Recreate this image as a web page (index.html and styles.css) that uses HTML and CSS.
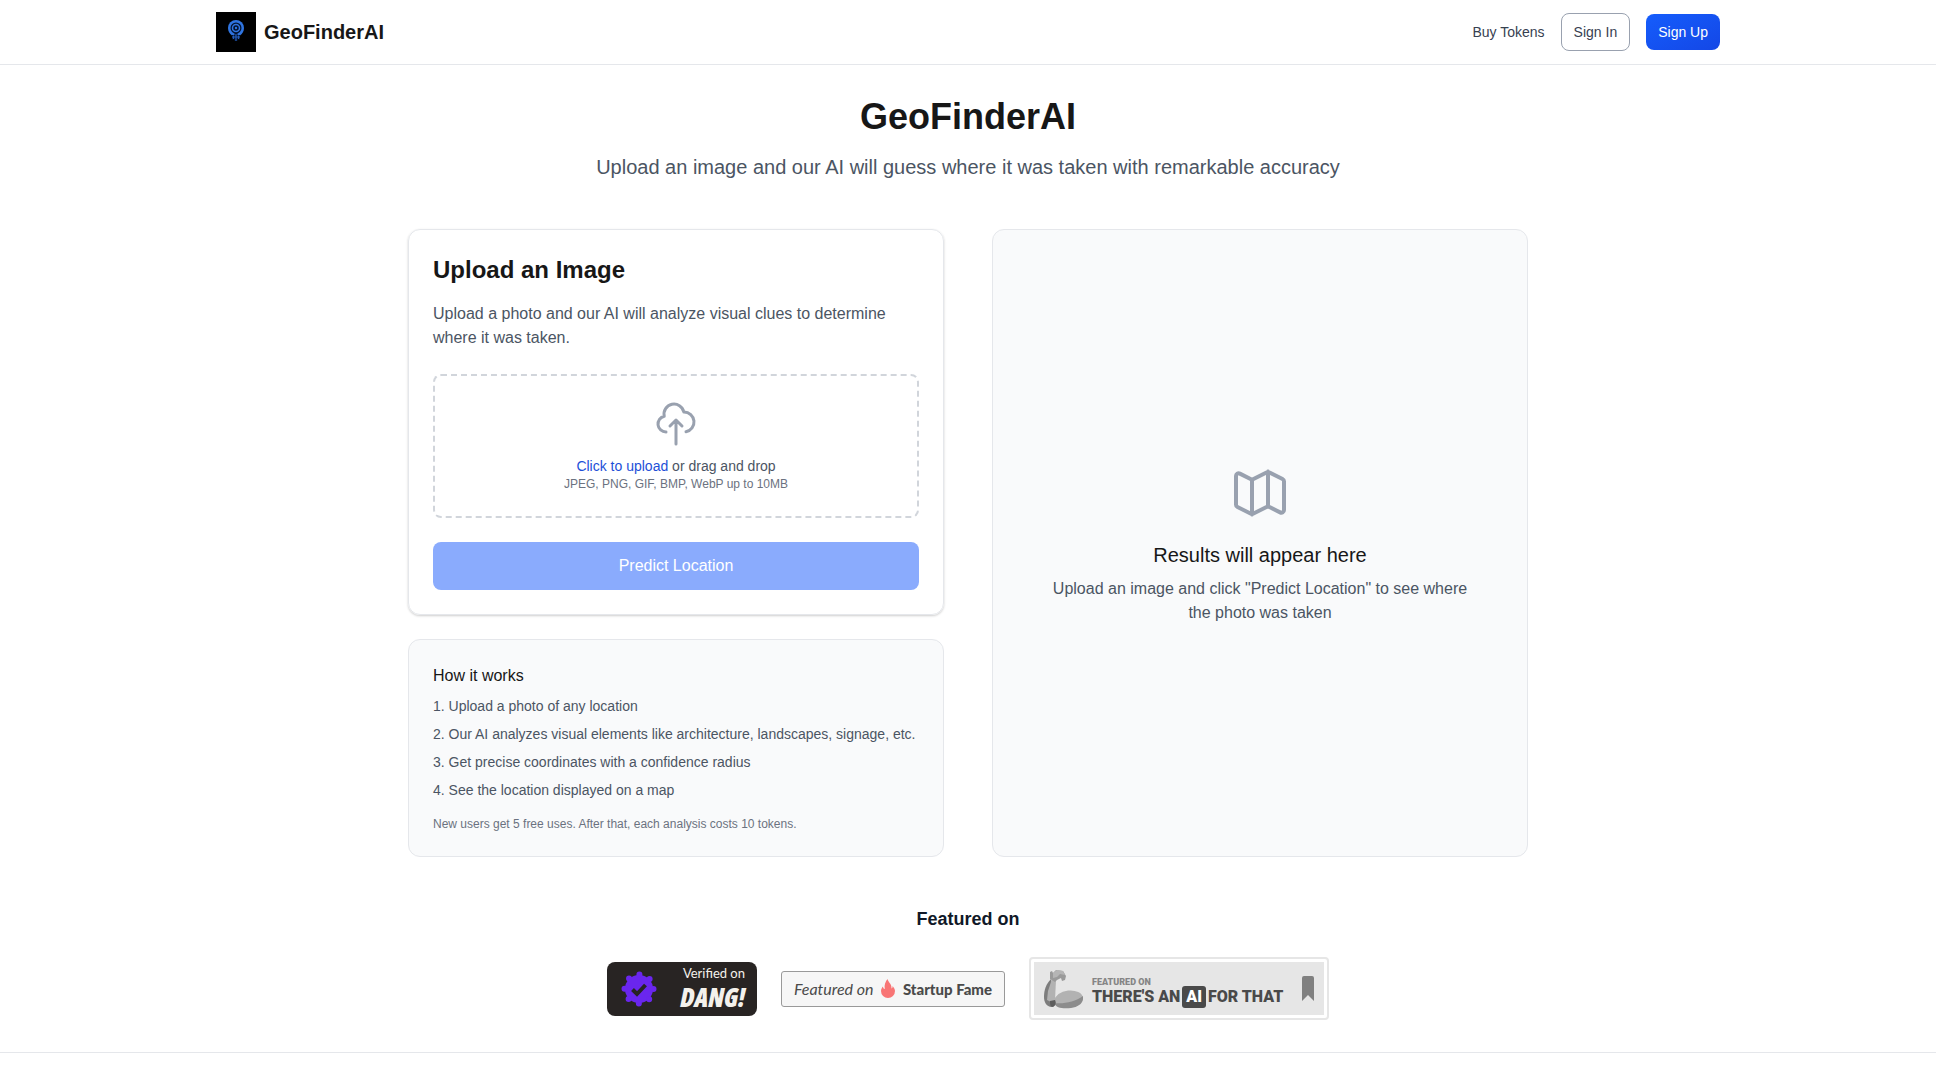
FILE: index.html
```html
<!DOCTYPE html>
<html lang="en">
  <head>
    <meta charset="UTF-8" />
    <meta name="viewport" content="width=device-width, initial-scale=1.0" />
    <title>GeoFinderAI</title>
    <link rel="stylesheet" href="styles.css">
  </head>
  <body>
    <header class="header">
      <div class="header-inner">
        <a class="brand" href="#">
          <svg class="logo" viewBox="0 0 40 40">
            <rect width="40" height="40" fill="#000" />
            <path d="M16 23.500C13.500 21.500 12 19 12 16a8 8 0 0 1 16 0c0 3-1.500 5.500-4 7.500z" fill="#2f74e0" />
            <circle cx="20" cy="16" r="5.500" fill="#04122c" />
            <circle cx="20" cy="16" r="3.500" fill="none" stroke="#2f74e0" stroke-width="1.500" />
            <circle cx="20" cy="16" r="1.200" fill="#2f74e0" />
            <path d="M20 21v8M16 25h8M17.500 23v4.500M22.500 23v4.500" fill="none" stroke="#04122c" stroke-width="3" />
            <path d="M20 22v7M16 25h8M17.500 23.500v3.500M22.500 23.500v3.500" fill="none" stroke="#255cb8" stroke-width="1.200" />
          </svg>
          <span>GeoFinderAI</span>
        </a>
        <nav class="nav">
          <a class="nav-link" href="#">Buy Tokens</a>
          <button class="btn btn-outline" type="button">Sign In</button>
          <button class="btn btn-primary" type="button">Sign Up</button>
        </nav>
      </div>
    </header>

    <main class="main">
      <div class="hero">
        <h1>GeoFinderAI</h1>
        <p>Upload an image and our AI will guess where it was taken with remarkable accuracy</p>
      </div>

      <div class="columns">
        <div class="left">
          <section class="card upload">
            <h2>Upload an Image</h2>
            <p class="desc">Upload a photo and our AI will analyze visual clues to determine where it was taken.</p>
            <label class="dropzone" for="file">
              <svg class="cloud" viewBox="0 0 24 24">
                <path d="M7 16a4 4 0 01-.88-7.903A5 5 0 1115.9 6L16 6a5 5 0 011 9.9M15 13l-3-3m0 0l-3 3m3-3v12" />
              </svg>
              <span class="drop-text"><span class="drop-link">Click to upload</span> or drag and drop</span>
              <span class="drop-hint">JPEG, PNG, GIF, BMP, WebP up to 10MB</span>
              <input id="file" type="file" accept="image/*" hidden />
            </label>
            <button class="predict" type="button" disabled>Predict Location</button>
          </section>

          <section class="card muted">
            <h3>How it works</h3>
            <ol class="steps">
              <li>Upload a photo of any location</li>
              <li>Our AI analyzes visual elements like architecture, landscapes, signage, etc.</li>
              <li>Get precise coordinates with a confidence radius</li>
              <li>See the location displayed on a map</li>
            </ol>
            <p class="note">New users get 5 free uses. After that, each analysis costs 10 tokens.</p>
          </section>
        </div>

        <section class="card muted results">
          <svg class="map" viewBox="0 0 24 24">
            <path d="M9 20l-5.447-2.724A1 1 0 013 16.382V5.618a1 1 0 011.447-.894L9 7m0 13l6-3m-6 3V7m6 10l4.553 2.276A1 1 0 0021 18.382V7.618a1 1 0 00-.553-.894L15 4m0 13V4m0 0L9 7" />
          </svg>
          <h3>Results will appear here</h3>
          <p>Upload an image and click "Predict Location" to see where the photo was taken</p>
        </section>
      </div>
    </main>

    <section class="featured">
      <h2>Featured on</h2>
      <div class="badges">
        <a class="badge dang" href="#">
          <svg class="seal" viewBox="0 0 36 36">
            <circle cx="18" cy="18" r="14" />
            <circle cx="18" cy="18" r="14.500" class="scallop" />
            <path d="M11.500 18.500l4.500 4.500 8.500-9" />
          </svg>
          <span class="dang-text">
            <span class="dang-top">Verified on</span>
            <span class="dang-name">DANG!</span>
          </span>
        </a>
        <a class="badge fame" href="#">
          <span class="fame-pre">Featured on</span>
          <svg class="flame" viewBox="0 0 14 19">
            <path d="M6.500 0C7 3 11 5 10.500 9.500 11.500 9 11.700 8 11.500 7 13 8.500 14 10.200 14 12a7 7 0 0 1-14 0C0 10 1 8.500 2 7.500c0 1.500.700 2.300 1.800 2.500C3 6 4.500 2.500 6.500 0z" />
          </svg>
          <span class="fame-name">Startup Fame</span>
        </a>
        <a class="badge taaft" href="#">
          <span class="taaft-inner">
            <svg class="arm" viewBox="0 0 39 40">
              <path d="M7 10C2 15 0 21 0 28c0 5 2 9 7 10 4 0 5-4 5-6z" fill="#7d7d7d" />
              <path d="M8 10L4 22l-1 9 6 3 2-3 1-20z" fill="#b2b2b2" />
              <path d="M6 10V3l2-1 1 2 3-3 7 1 3 5-1 4-3 1-1-3-4 2-2 2z" fill="#9a9a9a" />
              <path d="M9 4l4-3 6 1 2 4-5-1-3 3-4 1z" fill="#b5b5b5" />
              <ellipse cx="25" cy="30" rx="14" ry="8.500" transform="rotate(-6 25 30)" fill="#b2b2b2" />
              <path d="M10 34c10 1 21-1 29-7 1 7-4 11-12 12-8 1-15 0-17-5z" fill="#8c8c8c" />
              <path d="M6 32l5-1c1 3 1 5-2 7-3 0-3-3-3-6z" fill="#5c5c5c" />
            </svg>
            <span class="taaft-text">
              <span class="taaft-top">FEATURED ON</span>
              <span class="taaft-name">THERE'S AN<b>AI</b>FOR THAT</span>
            </span>
            <svg class="bookmark" viewBox="0 0 12 25">
              <path d="M2 0h8a2 2 0 0 1 2 2v23l-6-6-6 6V2a2 2 0 0 1 2-2z" />
            </svg>
          </span>
        </a>
      </div>
    </section>

    <footer class="footer"></footer>
  </body>
</html>
```
FILE: styles.css
```css
* {
  margin: 0;
  padding: 0;
  box-sizing: border-box;
}
body {
  font-family: "Liberation Sans", Arial, sans-serif;
  font-size: 16px;
  line-height: 24px;
  color: #171717;
  background: #fff;
}
a {
  color: inherit;
  text-decoration: none;
}
button {
  font: inherit;
}
svg {
  display: block;
  flex-shrink: 0;
}

/* Header */
.header {
  border-bottom: 1px solid #e5e7eb;
}
.header-inner {
  display: flex;
  justify-content: space-between;
  align-items: center;
  max-width: 1536px;
  height: 64px;
  margin: 0 auto;
  padding: 0 16px;
}
.brand {
  display: flex;
  align-items: center;
  gap: 8px;
  font-size: 20px;
  font-weight: bold;
}
.logo {
  width: 40px;
  height: 40px;
}
.nav {
  display: flex;
  align-items: center;
  gap: 16px;
  font-size: 14px;
  line-height: 20px;
}
.nav-link {
  color: #374151;
}
.btn {
  padding: 8px 12px;
  border: 0;
  border-radius: 8px;
}
.btn-outline {
  border: 1px solid #99a1af;
  color: #374151;
  background: #fff;
}
.btn-primary {
  color: #fff;
  background: linear-gradient(to bottom right, #155dfc, #1447e6);
}

/* Hero */
.main {
  max-width: 1152px;
  margin: 0 auto;
  padding: 32px 16px 0;
}
.hero {
  margin-bottom: 48px;
  text-align: center;
}
.hero h1 {
  margin-bottom: 16px;
  font-size: 36px;
  line-height: 40px;
}
.hero p {
  font-size: 20px;
  line-height: 28px;
  color: #4b5563;
}

/* Cards */
.columns {
  display: grid;
  grid-template-columns: 1fr 1fr;
  gap: 48px;
}
.left {
  display: flex;
  flex-direction: column;
  gap: 24px;
}
.card {
  padding: 24px;
  border: 1px solid #e5e7eb;
  border-radius: 12px;
}
.muted {
  background: #f9fafb;
}
.upload {
  box-shadow: 0 1px 3px rgba(0, 0, 0, 0.1), 0 1px 2px rgba(0, 0, 0, 0.1);
}
.upload h2 {
  margin-bottom: 16px;
  font-size: 24px;
  line-height: 32px;
}
.desc {
  margin-bottom: 24px;
  color: #4b5563;
}
.dropzone {
  display: flex;
  flex-direction: column;
  align-items: center;
  margin-bottom: 24px;
  padding: 24px;
  border: 2px dashed #d1d5db;
  border-radius: 8px;
  cursor: pointer;
}
.cloud,
.map {
  fill: none;
  stroke: #99a1af;
  stroke-width: 1.5;
  stroke-linecap: round;
  stroke-linejoin: round;
}
.cloud {
  width: 48px;
  height: 48px;
  margin-bottom: 8px;
}
.drop-text {
  font-size: 14px;
  line-height: 20px;
  color: #4b5563;
}
.drop-link {
  color: #1d4fd8;
}
.drop-hint {
  font-size: 12px;
  line-height: 16px;
  color: #6b7280;
}
.predict {
  width: 100%;
  height: 48px;
  border: 0;
  border-radius: 8px;
  color: #fff;
  background: #8aabfd;
}
.muted h3 {
  margin-bottom: 8px;
  font-weight: normal;
  font-size: 16px;
}
.steps {
  display: flex;
  flex-direction: column;
  gap: 8px;
  margin-bottom: 16px;
  list-style-position: inside;
  font-size: 14px;
  line-height: 20px;
  color: #4b5563;
}
.note {
  font-size: 12px;
  line-height: 16px;
  color: #6b7280;
}
.results {
  display: flex;
  flex-direction: column;
  justify-content: center;
  align-items: center;
  padding: 48px;
  text-align: center;
}
.map {
  width: 64px;
  height: 64px;
  margin-bottom: 16px;
}
.results h3 {
  font-size: 20px;
  line-height: 28px;
}
.results p {
  color: #4b5563;
}

/* Featured badges */
.featured {
  padding: 48px 16px 32px;
  text-align: center;
}
.featured h2 {
  margin-bottom: 24px;
  font-size: 18px;
  line-height: 28px;
  color: #101828;
}
.badges {
  display: flex;
  flex-wrap: wrap;
  justify-content: center;
  align-items: center;
  gap: 24px;
}
.badge {
  display: flex;
  align-items: center;
  white-space: nowrap;
}
.dang {
  justify-content: space-between;
  width: 150px;
  height: 54px;
  padding: 0 12px 0 14px;
  border-radius: 8px;
  background: #282423;
  color: #f4f1ec;
}
.seal {
  width: 36px;
  height: 36px;
  fill: #6a26ee;
}
.seal .scallop {
  fill: none;
  stroke: #6a26ee;
  stroke-width: 6;
  stroke-linecap: round;
  stroke-dasharray: 0 11.388;
}
.seal path {
  fill: none;
  stroke: #282423;
  stroke-width: 4;
}
.dang-text {
  display: flex;
  flex-direction: column;
  align-items: flex-end;
}
.dang-top {
  font-family: Lato, sans-serif;
  font-size: 13px;
  line-height: 16px;
}
.dang-name {
  font-family: "Open Sans", sans-serif;
  font-size: 26px;
  line-height: 32px;
  font-style: italic;
  font-weight: 800;
  font-stretch: condensed;
}
.fame {
  justify-content: space-between;
  width: 224px;
  height: 36px;
  padding: 0 12px;
  border: 1px solid #999;
  border-radius: 3px;
  background: #f6f6f6;
  color: #4a4a4a;
}
.fame-pre {
  font-family: Lato, sans-serif;
  font-size: 16px;
  font-style: italic;
}
.fame-name {
  font-family: Lato, sans-serif;
  font-size: 15px;
  font-weight: 900;
}
.flame {
  width: 14px;
  height: 19px;
  fill: #f87575;
}
.taaft {
  width: 300px;
  height: 63px;
  padding: 3px;
  border: 2px solid #e6e6e6;
  border-radius: 4px;
}
.taaft-inner {
  display: flex;
  align-items: center;
  width: 100%;
  height: 100%;
  padding: 0 10px;
  background: #e6e6e6;
}
.arm {
  width: 39px;
  height: 40px;
  margin-right: 9px;
}
.taaft-text {
  display: flex;
  flex-direction: column;
  align-items: flex-start;
  flex: 1;
  padding-top: 8px;
  font-family: Roboto, sans-serif;
  font-weight: 900;
}
.taaft-top {
  font-size: 9px;
  line-height: 8px;
  color: #858585;
}
.taaft-name {
  font-size: 16px;
  line-height: 22px;
  color: #4a4a4a;
}
.taaft-name b {
  display: inline-block;
  margin: 0 2px;
  padding: 0 4px;
  border-radius: 3px;
  color: #fff;
  background: #4a4a4a;
}
.bookmark {
  width: 12px;
  height: 25px;
  fill: #808080;
}

.footer {
  border-top: 1px solid #e5e7eb;
}
```
